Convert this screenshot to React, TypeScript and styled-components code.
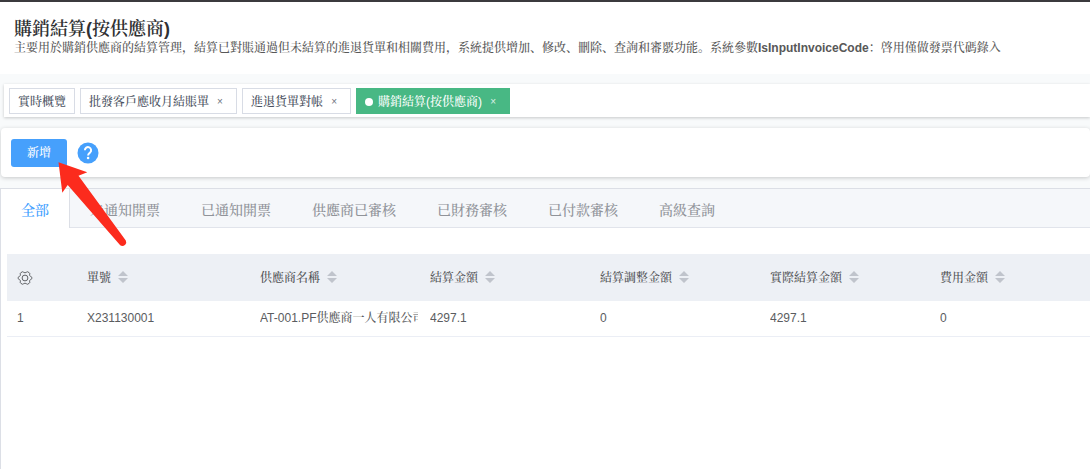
import React from "react";
import styled, { createGlobalStyle, css } from "styled-components";

const GlobalStyle = createGlobalStyle`
  * { box-sizing: border-box; }
  body {
    margin: 0;
    background: #f8fafb;
    color: #5a5c60;
    font-family: "Liberation Sans", "Noto Serif CJK SC", "Noto Sans CJK SC", sans-serif;
    font-size: 12px;
    font-weight: 500;
    line-height: 16px;
  }
  button { font: inherit; cursor: pointer; }
`;

const Page = styled.div`
  position: relative;
  display: flex;
  flex-direction: column;
  min-height: 100vh;
  overflow: hidden;
  border-top: 2px solid #3b3a3d;
`;

const Header = styled.header`
  background: #fff;
  padding: 16px 14px 18px;
`;

const Title = styled.h1`
  margin: 0;
  font-size: 18px;
  font-weight: 600;
  line-height: 22px;
  color: #303133;
`;

const Description = styled.p`
  margin: 0;
  color: #585858;
`;

const PageTabs = styled.nav`
  display: flex;
  gap: 5px;
  margin: 10px 0 0 4px;
  padding: 4px 5px 3px;
  background: #fff;
  box-shadow: 0 1px 3px rgba(0, 0, 0, 0.2);
`;

const PageTab = styled.div<{ $active?: boolean }>`
  display: flex;
  align-items: center;
  height: 26px;
  padding: 1px 8px 0;
  border: 1px solid #d8dce5;
  background: #fff;
  color: #495060;
  white-space: nowrap;
  ${(p) =>
    p.$active &&
    css`
      border-color: #48b884;
      background: #48b884;
      color: #fff;
    `}
`;

const TabLink = styled.a`
  color: inherit;
  text-decoration: none;
`;

const Dot = styled.span`
  width: 8px;
  height: 8px;
  margin-right: 5px;
  border-radius: 50%;
  background: #fff;
`;

const CloseButton = styled.button`
  width: 16px;
  margin-left: 3px;
  padding: 0;
  border: 0;
  background: none;
  color: inherit;
  font-size: 10px;
  line-height: 16px;
  opacity: 0.8;
`;

const Toolbar = styled.section`
  display: flex;
  align-items: center;
  gap: 10px;
  height: 49px;
  margin: 11px 0 0 1px;
  padding: 0 10px;
  border-radius: 4px;
  background: #fff;
  box-shadow: 0 1px 4px rgba(0, 0, 0, 0.2);
`;

const PrimaryButton = styled.button`
  height: 28px;
  padding: 0 16px;
  border: 0;
  border-radius: 3px;
  background: #46a0fc;
  color: #fff;
`;

const HelpButton = styled.button`
  display: flex;
  padding: 0;
  border: 0;
  background: none;
`;

const Card = styled.main`
  flex: 1;
  margin-top: 11px;
  border: 1px solid #dcdfe6;
  border-width: 1px 0 0 1px;
  background: #fff;
`;

const StatusTabs = styled.div`
  display: flex;
  border-bottom: 1px solid #e1e4eb;
  background: #f5f7fa;
`;

const StatusTab = styled.button<{ $active?: boolean }>`
  height: 39px;
  margin: 0 0 -1px -1px;
  padding: 2px 20px 0;
  border: 1px solid transparent;
  border-width: 0 1px;
  background: none;
  color: #909399;
  font-size: 14px;
  white-space: nowrap;
  ${(p) =>
    p.$active &&
    css`
      border-color: #dcdfe6;
      background: #fff;
      color: #409eff;
    `}
`;

const TableArea = styled.div`
  padding: 26px 0 0 6px;
  overflow: hidden;
`;

const Table = styled.table`
  width: 100%;
  table-layout: fixed;
  border-collapse: collapse;
  text-align: left;
`;

const Col = styled.col<{ $width?: number }>`
  width: ${(p) => (p.$width ? `${p.$width}px` : "auto")};
`;

const HeadCell = styled.th`
  height: 47px;
  padding: 0 0 0 10px;
  background: #edf0f5;
  color: #515356;
  font-weight: 500;
`;

const HeadContent = styled.div`
  display: flex;
  align-items: center;
  gap: 7px;
`;

const BodyCell = styled.td`
  height: 35px;
  padding: 0 2px 0 10px;
  border-bottom: 1px solid #ebeef5;
`;

const CellText = styled.div`
  overflow: hidden;
  white-space: nowrap;
`;

const IconButton = styled.button`
  display: flex;
  padding: 0;
  border: 0;
  background: none;
  color: #606266;
`;

const SortMark = styled.svg`
  margin-top: -2px;
`;

const Pointer = styled.svg`
  position: absolute;
  top: 158px;
  left: 54px;
  pointer-events: none;
`;

const Gear = () => (
  <svg width="16" height="14" viewBox="0 0 16 14" fill="none" stroke="currentColor" strokeLinejoin="round">
    <path d="M5 1Q5.600.4 6.300 1.100 7 1.700 8 1.700 9 1.700 9.700 1.100 10.400.4 11 1L12.300 1.800Q13 2.200 12.700 3.100 12.400 4 12.900 4.800 13.400 5.600 14.300 5.800 14.900 6 14.900 7 14.900 8 14.300 8.200 13.400 8.400 12.900 9.200 12.400 10 12.700 10.900 13 11.800 12.300 12.200L11 13Q10.400 13.600 9.700 12.900 9 12.300 8 12.300 7 12.300 6.300 12.900 5.600 13.600 5 13L3.700 12.200Q3 11.800 3.300 10.900 3.600 10 3.100 9.200 2.600 8.400 1.700 8.200 1.100 8 1.100 7 1.100 6 1.700 5.800 2.600 5.600 3.100 4.800 3.600 4 3.300 3.100 3 2.200 3.700 1.800Z" />
    <circle cx="8" cy="7" r="2.900" />
  </svg>
);

const SortIcon = () => (
  <SortMark width="10" height="12" viewBox="0 0 10 12" fill="#c0c4cc">
    <path d="M0 5 5 0 10 5ZM0 7H10L5 12Z" />
  </SortMark>
);

const pageTabs = [
  { label: "實時概覽" },
  { label: "批發客戶應收月結賬單", closable: true },
  { label: "進退貨單對帳", closable: true },
  { label: "購銷結算(按供應商)", closable: true, active: true },
];

const statuses = ["全部", "未通知開票", "已通知開票", "供應商已審核", "已財務審核", "已付款審核", "高級查詢"];

const columns = [
  { label: "單號", width: 173 },
  { label: "供應商名稱", width: 170 },
  { label: "結算金額", width: 170 },
  { label: "結算調整金額", width: 170 },
  { label: "實際結算金額", width: 170 },
  { label: "費用金額" },
];

const rows = [["1", "X231130001", "AT-001.PF供應商一人有限公司", "4297.1", "0", "4297.1", "0"]];

export default function App() {
  return (
    <Page lang="zh-CN">
      <GlobalStyle />
      <Header>
        <Title>購銷結算(按供應商)</Title>
        <Description>
          主要用於購銷供應商的結算管理，結算已對賬通過但未結算的進退貨單和相關費用，系統提供增加、修改、刪除、查詢和審覈功能。系統參數
          <strong>IsInputInvoiceCode</strong>：啓用僅做發票代碼錄入
        </Description>
      </Header>

      <PageTabs>
        {pageTabs.map((tab) => (
          <PageTab key={tab.label} $active={tab.active}>
            {tab.active && <Dot />}
            <TabLink href="#">{tab.label}</TabLink>
            {tab.closable && <CloseButton aria-label="關閉">×</CloseButton>}
          </PageTab>
        ))}
      </PageTabs>

      <Toolbar>
        <PrimaryButton>新增</PrimaryButton>
        <HelpButton aria-label="說明">
          <svg width="22" height="22" viewBox="0 0 22 22" fill="none">
            <circle cx="11" cy="11" r="10.5" fill="#46a0fc" />
            <path d="M7.900 8.200a3.100 3.100 0 1 1 5.300 2.200c-1.200 1-2.100 1.500-2.100 3.200" stroke="#fff" strokeWidth="2" />
            <circle cx="11.100" cy="16" r="1.300" fill="#fff" />
          </svg>
        </HelpButton>
      </Toolbar>

      <Card>
        <StatusTabs role="tablist">
          {statuses.map((label, i) => (
            <StatusTab key={label} role="tab" aria-selected={i === 0} $active={i === 0}>
              {label}
            </StatusTab>
          ))}
        </StatusTabs>
        <TableArea>
          <Table>
            <colgroup>
              <Col $width={70} />
              {columns.map((c) => (
                <Col key={c.label} $width={c.width} />
              ))}
            </colgroup>
            <thead>
              <tr>
                <HeadCell>
                  <IconButton aria-label="設置">
                    <Gear />
                  </IconButton>
                </HeadCell>
                {columns.map((c) => (
                  <HeadCell key={c.label}>
                    <HeadContent>
                      {c.label}
                      <SortIcon />
                    </HeadContent>
                  </HeadCell>
                ))}
              </tr>
            </thead>
            <tbody>
              {rows.map((row) => (
                <tr key={row[1]}>
                  {row.map((value, i) => (
                    <BodyCell key={i}>
                      <CellText>{value}</CellText>
                    </BodyCell>
                  ))}
                </tr>
              ))}
            </tbody>
          </Table>
        </TableArea>
      </Card>

      <Pointer width="76" height="90" viewBox="0 0 76 90" fill="#fc2b1d" aria-hidden="true">
        <path d="M4.500 2.300 33.300 12.300 24.500 15.700 71.800 80.500Q73 83 71.200 84.800 68.500 87 66.200 85.200L13.700 25 8.300 32.700Z" />
      </Pointer>
    </Page>
  );
}
